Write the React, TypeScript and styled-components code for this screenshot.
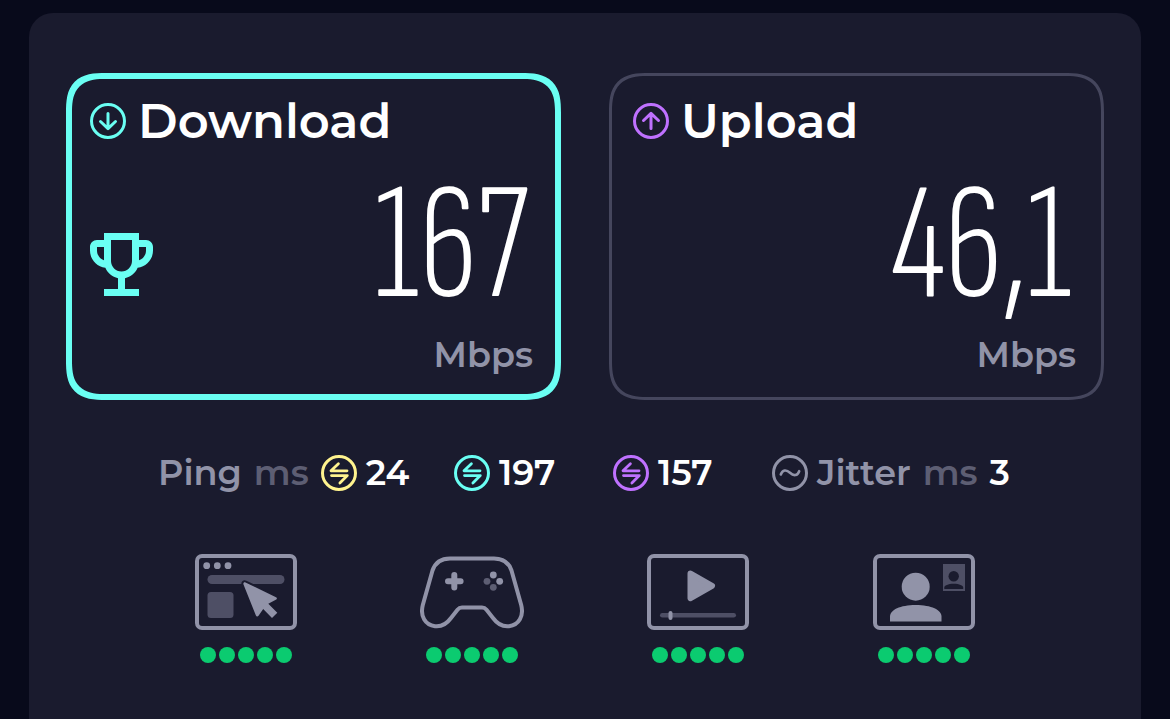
import React from "react";
import styled, { createGlobalStyle } from "styled-components";

const color = {
  page: "#080a1b",
  panel: "#1a1b2e",
  line: "#45465d",
  dim: "#5d5e73",
  muted: "#9193a8",
  cyan: "#6afff3",
  purple: "#bf71ff",
  yellow: "#fff38e",
  green: "#0bcb70",
};

const GlobalStyle = createGlobalStyle`
  *, *::before, *::after { box-sizing: border-box; }
  body {
    margin: 0;
    background: ${color.page};
    color: #fff;
    font-family: Montserrat, Inter, "Open Sans", sans-serif;
  }
  svg { display: block; flex: none; }
`;

const Page = styled.main`
  min-height: 100vh;
  display: flex;
  padding: 13px 29px 0;
`;

const Panel = styled.section`
  flex: 1;
  min-width: 0;
  padding: 60px 37px 40px;
  background: ${color.panel};
  border-radius: 24px 24px 0 0;
`;

const Cards = styled.div`
  display: grid;
  grid-template-columns: 1fr 1fr;
  gap: 48px;
`;

const Card = styled.article<{ $best?: boolean }>`
  display: flex;
  flex-direction: column;
  border: ${(p) => (p.$best ? 6 : 3)}px solid ${(p) => (p.$best ? color.cyan : color.line)};
  border-radius: 32px;
  padding: ${(p) => (p.$best ? "18px 22px 16px 18px" : "21px 25px 19px 21px")};

  @supports (corner-shape: squircle) {
    border-radius: 40px;
    corner-shape: superellipse(1.5);
  }
`;

const CardHeader = styled.header`
  display: flex;
  align-items: center;
  gap: 12px;
  height: 48px;
`;

const CardTitle = styled.h2`
  margin: 0;
  font-size: 48px;
  line-height: 48px;
  font-weight: 600;
`;

const Reading = styled.div`
  display: flex;
  align-items: center;
  justify-content: space-between;
  height: 156px;
  margin-top: 24px;
`;

const Trophy = styled.svg`
  width: 63px;
  height: 63px;
  margin-top: 34px;
  fill: ${color.cyan};
`;

const Speed = styled.output`
  margin-left: auto;
  padding-right: 4px;
  font-family: "Sofia Sans Extra Condensed", "Sofia Sans Condensed", "Roboto Condensed", Roboto, sans-serif;
  font-size: 166px;
  line-height: 156px;
  font-weight: 300;
`;

const Unit = styled.p`
  margin: 6px 0 0;
  text-align: right;
  font-size: 35px;
  line-height: 47px;
  font-weight: 600;
  color: ${color.muted};
`;

const Latency = styled.div`
  display: flex;
  align-items: center;
  justify-content: center;
  height: 48px;
  margin-top: 49px;
  font-size: 35px;
  line-height: 48px;
  font-weight: 600;
  white-space: nowrap;
`;

const LatencyGroup = styled.div<{ $width: number }>`
  display: flex;
  align-items: center;
  gap: 9px;
  flex: 0 0 ${(p) => p.$width}px;
`;

const Label = styled.span`
  color: ${color.muted};
`;

const Ms = styled.span`
  margin: 0 3px;
  color: ${color.dim};
`;

const Activities = styled.ul`
  display: grid;
  grid-template-columns: repeat(4, 1fr);
  margin: 57px 0 0;
  padding: 0 67px;
  list-style: none;
`;

const Activity = styled.li`
  display: flex;
  flex-direction: column;
  align-items: center;
  gap: 17px;
`;

const Dots = styled.div`
  display: flex;
  gap: 3px;
`;

const Dot = styled.i`
  width: 16px;
  height: 16px;
  border-radius: 50%;
  background: ${color.green};
`;

type IconProps = { tone: string; children: React.ReactNode };

const RoundIcon = ({ tone, children }: IconProps) => (
  <svg width="36" height="36" viewBox="0 0 36 36" fill="none" stroke={tone} strokeWidth="3" strokeLinecap="round" strokeLinejoin="round" aria-hidden="true">
    <circle cx="18" cy="18" r="16.5" />
    {children}
  </svg>
);

const DownIcon = () => (
  <RoundIcon tone={color.cyan}>
    <path d="M18 10.5V25M10.5 18.5L18 25.6L25.5 18.5" />
  </RoundIcon>
);

const UpIcon = () => (
  <RoundIcon tone={color.purple}>
    <path d="M18 25.5V11M10.5 17.5L18 10.4L25.5 17.5" />
  </RoundIcon>
);

const PingIcon = ({ tone }: { tone: string }) => (
  <RoundIcon tone={tone}>
    <path d="M26 15.8H10L17.4 8.7M10.5 20.6H26.3L18.9 27.9" strokeWidth="2.8" />
  </RoundIcon>
);

const JitterIcon = () => (
  <RoundIcon tone={color.muted}>
    <path d="M8.8 19.5C10.5 14.8 14.2 14.3 18 17.8C21.8 21.3 25.5 20.8 27.2 16.2" strokeWidth="2.6" />
  </RoundIcon>
);

const Frame = () => (
  <rect x="2" y="2" width="98" height="72" rx="5" fill="none" stroke={color.muted} strokeWidth="4" />
);

const BrowsingIcon = () => (
  <svg width="102" height="76" viewBox="0 0 102 76" role="img" aria-label="Web browsing">
    <Frame />
    <g fill={color.muted}>
      <circle cx="11.7" cy="11.7" r="3.4" />
      <circle cx="22.3" cy="11.7" r="3.4" />
      <circle cx="33" cy="11.7" r="3.4" />
    </g>
    <g fill="#4e4f65">
      <rect x="12.5" y="21" width="77" height="9" rx="4.5" />
      <rect x="12.5" y="38" width="26" height="26" rx="3.5" />
    </g>
    <path
      d="M50.5 28.5L81 43.3C82.3 44 82.2 45.4 80.8 45.8L73.3 49.7L82.3 58.8L77 64L68.2 55L63.7 61.4C62.8 62.8 61.4 62.7 60.8 61.2L48.5 30.5C48 29 49 27.9 50.5 28.5Z"
      fill={color.muted}
      stroke={color.panel}
      strokeWidth="4"
      paintOrder="stroke"
    />
  </svg>
);

const GamingIcon = () => (
  <svg width="104" height="76" viewBox="0 0 104 76" role="img" aria-label="Gaming">
    <path
      d="M30 4.4H74C83 4.4 89 9 91.5 16.5L101.2 51C104 62 99 71 89 72.2C82 73 77 69.5 73 64L66.5 55.8C65.2 54.2 64 53.6 62 53.6H42C40 53.6 38.8 54.2 37.5 55.8L31 64C27 69.5 22 73 15 72.2C5 71 0 62 2.8 51L12.5 16.5C15 9 21 4.4 30 4.4Z"
      fill="none"
      stroke={color.muted}
      strokeWidth="4"
      strokeLinejoin="round"
    />
    <path d="M34.3 21V33.6M28 27.3H40.6" stroke={color.muted} strokeWidth="6" strokeLinecap="round" />
    <g fill={color.muted}>
      <circle cx="73.3" cy="21" r="3.4" />
      <circle cx="79.7" cy="27.3" r="3.4" />
    </g>
    <g fill="#5d5e73">
      <circle cx="67" cy="27.3" r="3.4" />
      <circle cx="73.3" cy="33.3" r="3.4" />
    </g>
  </svg>
);

const StreamingIcon = () => (
  <svg width="102" height="76" viewBox="0 0 102 76" role="img" aria-label="Video streaming">
    <Frame />
    <path d="M43.5 19.5L65 31.8L43.5 44.2Z" fill={color.muted} stroke={color.muted} strokeWidth="6" strokeLinejoin="round" />
    <rect x="13" y="59" width="76" height="4.6" rx="2.3" fill="#4e4f65" />
    <rect x="21.5" y="57" width="4" height="9" rx="2" fill={color.muted} />
  </svg>
);

const CallIcon = () => (
  <svg width="102" height="76" viewBox="0 0 102 76" role="img" aria-label="Video call">
    <Frame />
    <g fill={color.muted}>
      <circle cx="42.7" cy="32.7" r="14" />
      <path d="M17 67.5V62.5C17 56 27 51 42.7 51S68.5 56 68.5 62.5V67.5Z" />
    </g>
    <rect x="70" y="10" width="22" height="27" fill="#4e4f65" />
    <g fill={color.panel}>
      <circle cx="80.7" cy="22.3" r="5.2" />
      <path d="M71.3 35V33.4C71.3 31.5 75 29.7 80.7 29.7S90.2 31.5 90.2 33.4V35Z" />
    </g>
  </svg>
);

const FiveDots = () => (
  <Dots role="img" aria-label="5 out of 5">
    {[1, 2, 3, 4, 5].map((n) => (
      <Dot key={n} />
    ))}
  </Dots>
);

export default function App() {
  return (
    <>
      <GlobalStyle />
      <Page>
        <Panel>
          <Cards>
            <Card $best>
              <CardHeader>
                <DownIcon />
                <CardTitle>Download</CardTitle>
              </CardHeader>
              <Reading>
                <Trophy viewBox="3 3 18 18" aria-hidden="true">
                  <path d="M19 5h-2V3H7v2H5c-1.1 0-2 .9-2 2v1c0 2.55 1.92 4.63 4.39 4.94.63 1.5 1.98 2.63 3.61 2.96V19H7v2h10v-2h-4v-3.1c1.63-.33 2.98-1.46 3.61-2.96C19.08 12.63 21 10.55 21 8V7c0-1.1-.9-2-2-2zM5 8V7h2v3.82C5.84 10.4 5 9.3 5 8zm7 6c-1.65 0-3-1.35-3-3V5h6v6c0 1.65-1.35 3-3 3zm7-6c0 1.3-.84 2.4-2 2.82V7h2v1z" />
                </Trophy>
                <Speed>167</Speed>
              </Reading>
              <Unit>Mbps</Unit>
            </Card>
            <Card>
              <CardHeader>
                <UpIcon />
                <CardTitle>Upload</CardTitle>
              </CardHeader>
              <Reading>
                <Speed>46,1</Speed>
              </Reading>
              <Unit>Mbps</Unit>
            </Card>
          </Cards>

          <Latency>
            <LatencyGroup $width={296}>
              <Label>Ping</Label>
              <Ms>ms</Ms>
              <PingIcon tone={color.yellow} />
              <span>24</span>
            </LatencyGroup>
            <LatencyGroup $width={159}>
              <PingIcon tone={color.cyan} />
              <span>197</span>
            </LatencyGroup>
            <LatencyGroup $width={159}>
              <PingIcon tone={color.purple} />
              <span>157</span>
            </LatencyGroup>
            <LatencyGroup $width={240}>
              <JitterIcon />
              <Label>Jitter</Label>
              <Ms>ms</Ms>
              <span>3</span>
            </LatencyGroup>
          </Latency>

          <Activities>
            <Activity>
              <BrowsingIcon />
              <FiveDots />
            </Activity>
            <Activity>
              <GamingIcon />
              <FiveDots />
            </Activity>
            <Activity>
              <StreamingIcon />
              <FiveDots />
            </Activity>
            <Activity>
              <CallIcon />
              <FiveDots />
            </Activity>
          </Activities>
        </Panel>
      </Page>
    </>
  );
}
